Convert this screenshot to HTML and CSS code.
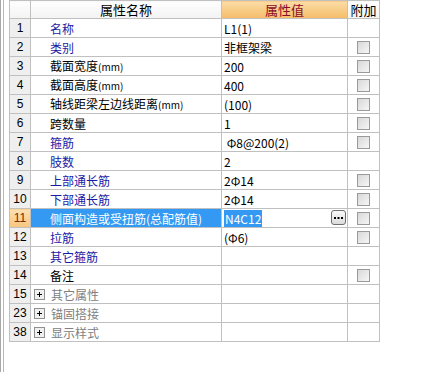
FILE: index.html
```html
<!DOCTYPE html>
<html lang="zh">
<head>
    <meta charset="UTF-8">
    <title>属性编辑</title>
    <link rel="stylesheet" href="styles.css">
</head>
<body>
    <div class="frame">
        <div class="pane">
            <table class="props">
                <colgroup>
                    <col class="c-num">
                    <col class="c-name">
                    <col class="c-val">
                    <col class="c-add">
                </colgroup>
                <thead>
                    <tr>
                        <th class="num"></th>
                        <th class="name-h">属性名称</th>
                        <th class="val-h">属性值</th>
                        <th class="add-h">附加</th>
                    </tr>
                </thead>
                <tbody>
                    <tr><td class="num">1</td><td class="name blue">名称</td><td class="val">L1(1)</td><td class="add"></td></tr>
                    <tr><td class="num">2</td><td class="name blue">类别</td><td class="val">非框架梁</td><td class="add"><span class="chk"></span></td></tr>
                    <tr><td class="num">3</td><td class="name">截面宽度<small>(mm)</small></td><td class="val">200</td><td class="add"><span class="chk"></span></td></tr>
                    <tr><td class="num">4</td><td class="name">截面高度<small>(mm)</small></td><td class="val">400</td><td class="add"><span class="chk"></span></td></tr>
                    <tr><td class="num">5</td><td class="name">轴线距梁左边线距离<small>(mm)</small></td><td class="val">(100)</td><td class="add"><span class="chk"></span></td></tr>
                    <tr><td class="num">6</td><td class="name">跨数量</td><td class="val">1</td><td class="add"><span class="chk"></span></td></tr>
                    <tr><td class="num">7</td><td class="name blue">箍筋</td><td class="val">&nbsp;Φ8@200(2)</td><td class="add"><span class="chk"></span></td></tr>
                    <tr><td class="num">8</td><td class="name blue">肢数</td><td class="val">2</td><td class="add"></td></tr>
                    <tr><td class="num">9</td><td class="name blue">上部通长筋</td><td class="val">2Φ14</td><td class="add"><span class="chk"></span></td></tr>
                    <tr><td class="num">10</td><td class="name blue">下部通长筋</td><td class="val">2Φ14</td><td class="add"><span class="chk"></span></td></tr>
                    <tr class="selected">
                        <td class="num">11</td>
                        <td class="name">侧面构造或受扭筋(总配筋值)</td>
                        <td class="val edit"><span class="sel-text">N4C12</span><span class="more"><svg width="13" height="13" viewBox="0 0 13 13"><rect x="2" y="6" width="2" height="2" fill="#000"/><rect x="5.5" y="6" width="2" height="2" fill="#000"/><rect x="9" y="6" width="2" height="2" fill="#000"/></svg></span></td>
                        <td class="add"><span class="chk"></span></td>
                    </tr>
                    <tr><td class="num">12</td><td class="name blue">拉筋</td><td class="val">(Φ6)</td><td class="add"><span class="chk"></span></td></tr>
                    <tr><td class="num">13</td><td class="name blue">其它箍筋</td><td class="val"></td><td class="add"></td></tr>
                    <tr><td class="num">14</td><td class="name">备注</td><td class="val"></td><td class="add"><span class="chk"></span></td></tr>
                    <tr class="group"><td class="num">15</td><td class="name"><span class="plus"></span>其它属性</td><td class="val"></td><td class="add"></td></tr>
                    <tr class="group"><td class="num">23</td><td class="name"><span class="plus"></span>锚固搭接</td><td class="val"></td><td class="add"></td></tr>
                    <tr class="group"><td class="num">38</td><td class="name"><span class="plus"></span>显示样式</td><td class="val"></td><td class="add"></td></tr>
                </tbody>
            </table>
        </div>
    </div>
</body>
</html>
```

FILE: styles.css
```css
* {
    margin: 0;
    padding: 0;
    box-sizing: border-box;
}

body {
    background: #fff;
    font-family: "Noto Sans CJK SC", "Liberation Sans", sans-serif;
    font-size: 12px;
    color: #000;
}

.frame {
    height: 372px;
    border-left: 1px solid #a8a8a8;
    padding-left: 2px;
}

.pane {
    height: 100%;
    border-left: 1px solid #b8b8b8;
    padding-left: 5px;
}

.props {
    border-collapse: collapse;
    table-layout: fixed;
    width: 370px;
}

.c-num { width: 21px; }
.c-name { width: 191px; }
.c-val { width: 126px; }
.c-add { width: 32px; }

.props th,
.props td {
    height: 19px;
    border: 1px solid #c0c0c0;
    padding: 0;
    line-height: 17px;
    white-space: nowrap;
    overflow: hidden;
    font-weight: normal;
}

.props thead th {
    height: 18px;
    background: linear-gradient(#fefefe, #f3f3f3);
    font-size: 13px;
    text-align: center;
}

.props thead th.val-h {
    background: linear-gradient(#fbdca6, #f5bc68);
    color: #8a0a2a;
}

td.num {
    background: #efefef;
    text-align: center;
    font-family: "Liberation Sans", sans-serif;
    font-size: 12px;
}

td.name {
    padding-left: 19px;
}

td.name small {
    font-size: 10px;
}

td.blue {
    color: #1a1aa6;
}

td.val {
    padding-left: 2px;
}

td.add {
    text-align: center;
}

.chk {
    display: inline-block;
    width: 13px;
    height: 13px;
    margin-top: 2px;
    vertical-align: top;
    border: 1px solid #9a9a9a;
    background: linear-gradient(135deg, #d8d8d8, #f6f6f6);
}

.selected td.num {
    background: linear-gradient(#fde0b0, #f8c57e);
    color: #7a2a10;
}

.selected td.name {
    background: #3399f3;
    color: #fff;
}

td.edit {
    position: relative;
}

.sel-text {
    background: #3399f3;
    color: #fff;
    padding: 0 1px;
}

.more {
    position: absolute;
    right: 1px;
    top: 1px;
    width: 15px;
    height: 15px;
    border: 1px solid #707070;
    border-radius: 3px;
    background: linear-gradient(#fafafa, #dcdcdc);
}

.more svg {
    display: block;
    margin: 0;
}

.group td.name {
    padding-left: 3px;
    color: #808080;
}

.plus {
    display: inline-block;
    position: relative;
    width: 11px;
    height: 11px;
    margin: 3px 6px 0 0;
    vertical-align: top;
    border: 1px solid #909090;
    background: #f0f0f0;
}

.plus::before,
.plus::after {
    content: "";
    position: absolute;
    background: #000;
}

.plus::before {
    left: 2px;
    top: 4px;
    width: 5px;
    height: 1px;
}

.plus::after {
    left: 4px;
    top: 2px;
    width: 1px;
    height: 5px;
}
```
